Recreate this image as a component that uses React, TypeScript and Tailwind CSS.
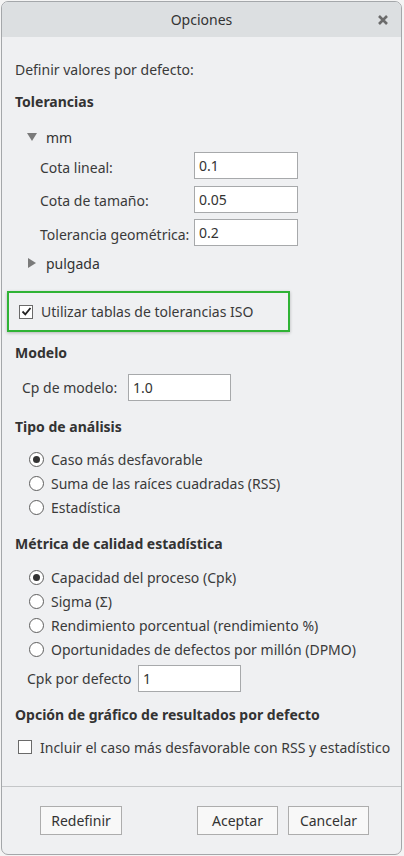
import React from 'react';

const font = { fontFamily: '"Noto Sans", "Open Sans", sans-serif' };

function TextInput({ value, width }: { value: string; width: string }) {
  return (
    <div
      className={`${width} h-[27px] bg-white border border-[#a7a9ab] flex items-center pl-[4px] text-[14px] text-[#333]`}
    >
      {value}
    </div>
  );
}

function Radio({ checked, label }: { checked?: boolean; label: string }) {
  return (
    <div className="h-[24px] flex items-center pl-[27px]">
      <div className="w-[15px] h-[15px] rounded-full border border-[#5e5e5e] bg-white flex items-center justify-center shrink-0">
        {checked && <div className="w-[7px] h-[7px] rounded-full bg-[#333]" />}
      </div>
      <span className="ml-[7px] text-[14px] text-[#3a3a3a] whitespace-nowrap">{label}</span>
    </div>
  );
}

function Checkbox({ checked }: { checked?: boolean }) {
  return (
    <div className="w-[14px] h-[14px] border border-[#6a6a6a] bg-white flex items-center justify-center shrink-0">
      {checked && (
        <svg width="11" height="11" viewBox="0 0 11 11">
          <path d="M1.5 5.5 L4.3 8.3 L9.5 2" fill="none" stroke="#222" strokeWidth="1.8" />
        </svg>
      )}
    </div>
  );
}

function Heading({ children, mt }: { children: React.ReactNode; mt: string }) {
  return (
    <div className={`${mt} h-[20px] flex items-center pl-[13px] text-[14px] font-bold text-[#333]`}>
      {children}
    </div>
  );
}

function Button({ label, width }: { label: string; width: string }) {
  return (
    <div
      className={`${width} h-[29px] border border-[#adadad] bg-[#f8f8f8] flex items-center justify-center text-[14px] text-[#333]`}
    >
      {label}
    </div>
  );
}

export default function App() {
  return (
    <div className="w-[404px] h-[856px] bg-[#f4f4f4] pl-[1px] pt-[1px]" style={font}>
      <div className="w-[401px] h-[854px] border border-[#a4a7aa] rounded-[7px] overflow-hidden bg-[#eff0f2] flex flex-col">
        {/* title bar */}
        <div className="h-[35px] bg-[#dcdfe1] flex items-center relative shrink-0">
          <div className="flex-1 text-center text-[14px] text-[#333]">Opciones</div>
          <svg className="absolute right-[13px] top-[13px]" width="10" height="10" viewBox="0 0 10 10">
            <path d="M1 1 L9 9 M9 1 L1 9" stroke="#6b6b6b" strokeWidth="2.6" />
          </svg>
        </div>

        <div className="mt-[22px] h-[20px] flex items-center pl-[13px] text-[14px] text-[#3a3a3a]">
          Definir valores por defecto:
        </div>

        <Heading mt="mt-[12px]">Tolerancias</Heading>

        <div className="mt-[16px] h-[20px] flex items-center pl-[25px] text-[14px] text-[#333]">
          <svg width="10" height="8" viewBox="0 0 10 8">
            <path d="M0 0 L10 0 L5 8 Z" fill="#7a7a7a" />
          </svg>
          <span className="ml-[9px]">mm</span>
        </div>

        <div className="mt-[5px] flex flex-col gap-[6.5px] pl-[38px]">
          {[
            ['Cota lineal:', '0.1'],
            ['Cota de tamaño:', '0.05'],
            ['Tolerancia geométrica:', '0.2'],
          ].map(([label, value]) => (
            <div key={label} className="flex items-center">
              <span className="w-[154px] pt-[3px] text-[14px] text-[#3a3a3a] whitespace-nowrap">{label}</span>
              <TextInput value={value} width="w-[104px]" />
            </div>
          ))}
        </div>

        <div className="mt-[7px] h-[20px] flex items-center pl-[26px] text-[14px] text-[#333]">
          <svg width="8" height="10" viewBox="0 0 8 10">
            <path d="M0 0 L8 5 L0 10 Z" fill="#7a7a7a" />
          </svg>
          <span className="ml-[10px]">pulgada</span>
        </div>

        <div className="mt-[18px] ml-[5px] w-[283px] h-[41px] border-2 border-[#2fb335] shadow-[0_1px_3px_rgba(0,0,0,0.25)] flex items-center pl-[10px]">
          <Checkbox checked />
          <span className="ml-[8px] text-[14px] text-[#3a3a3a]">Utilizar tablas de tolerancias ISO</span>
        </div>

        <Heading mt="mt-[10px]">Modelo</Heading>

        <div className="mt-[12px] flex items-center pl-[20px]">
          <span className="w-[106px] text-[14px] text-[#3a3a3a] whitespace-nowrap">Cp de modelo:</span>
          <TextInput value="1.0" width="w-[103px]" />
        </div>

        <Heading mt="mt-[15px]">Tipo de análisis</Heading>

        <div className="mt-[11px] flex flex-col">
          <Radio checked label="Caso más desfavorable" />
          <Radio label="Suma de las raíces cuadradas (RSS)" />
          <Radio label="Estadística" />
        </div>

        <Heading mt="mt-[14px]">Métrica de calidad estadística</Heading>

        <div className="mt-[12px] flex flex-col">
          <Radio checked label="Capacidad del proceso (Cpk)" />
          <Radio label="Sigma (Σ)" />
          <Radio label="Rendimiento porcentual (rendimiento %)" />
          <Radio label="Oportunidades de defectos por millón (DPMO)" />
        </div>

        <div className="mt-[4px] flex items-center pl-[25px]">
          <span className="w-[111px] text-[14px] text-[#3a3a3a] whitespace-nowrap">Cpk por defecto</span>
          <TextInput value="1" width="w-[103px]" />
        </div>

        <Heading mt="mt-[12px]">Opción de gráfico de resultados por defecto</Heading>

        <div className="mt-[13px] h-[20px] flex items-center pl-[16px]">
          <Checkbox />
          <span className="ml-[8px] text-[14px] text-[#3a3a3a] whitespace-nowrap">
            Incluir el caso más desfavorable con RSS y estadístico
          </span>
        </div>

        <div className="mt-[29px] h-px bg-[#c4c6c8]" />

        <div className="mt-[19px] flex items-center pl-[38px]">
          <Button label="Redefinir" width="w-[82px]" />
          <div className="w-[75px]" />
          <Button label="Aceptar" width="w-[81px]" />
          <div className="w-[10px]" />
          <Button label="Cancelar" width="w-[81px]" />
        </div>
      </div>
    </div>
  );
}
